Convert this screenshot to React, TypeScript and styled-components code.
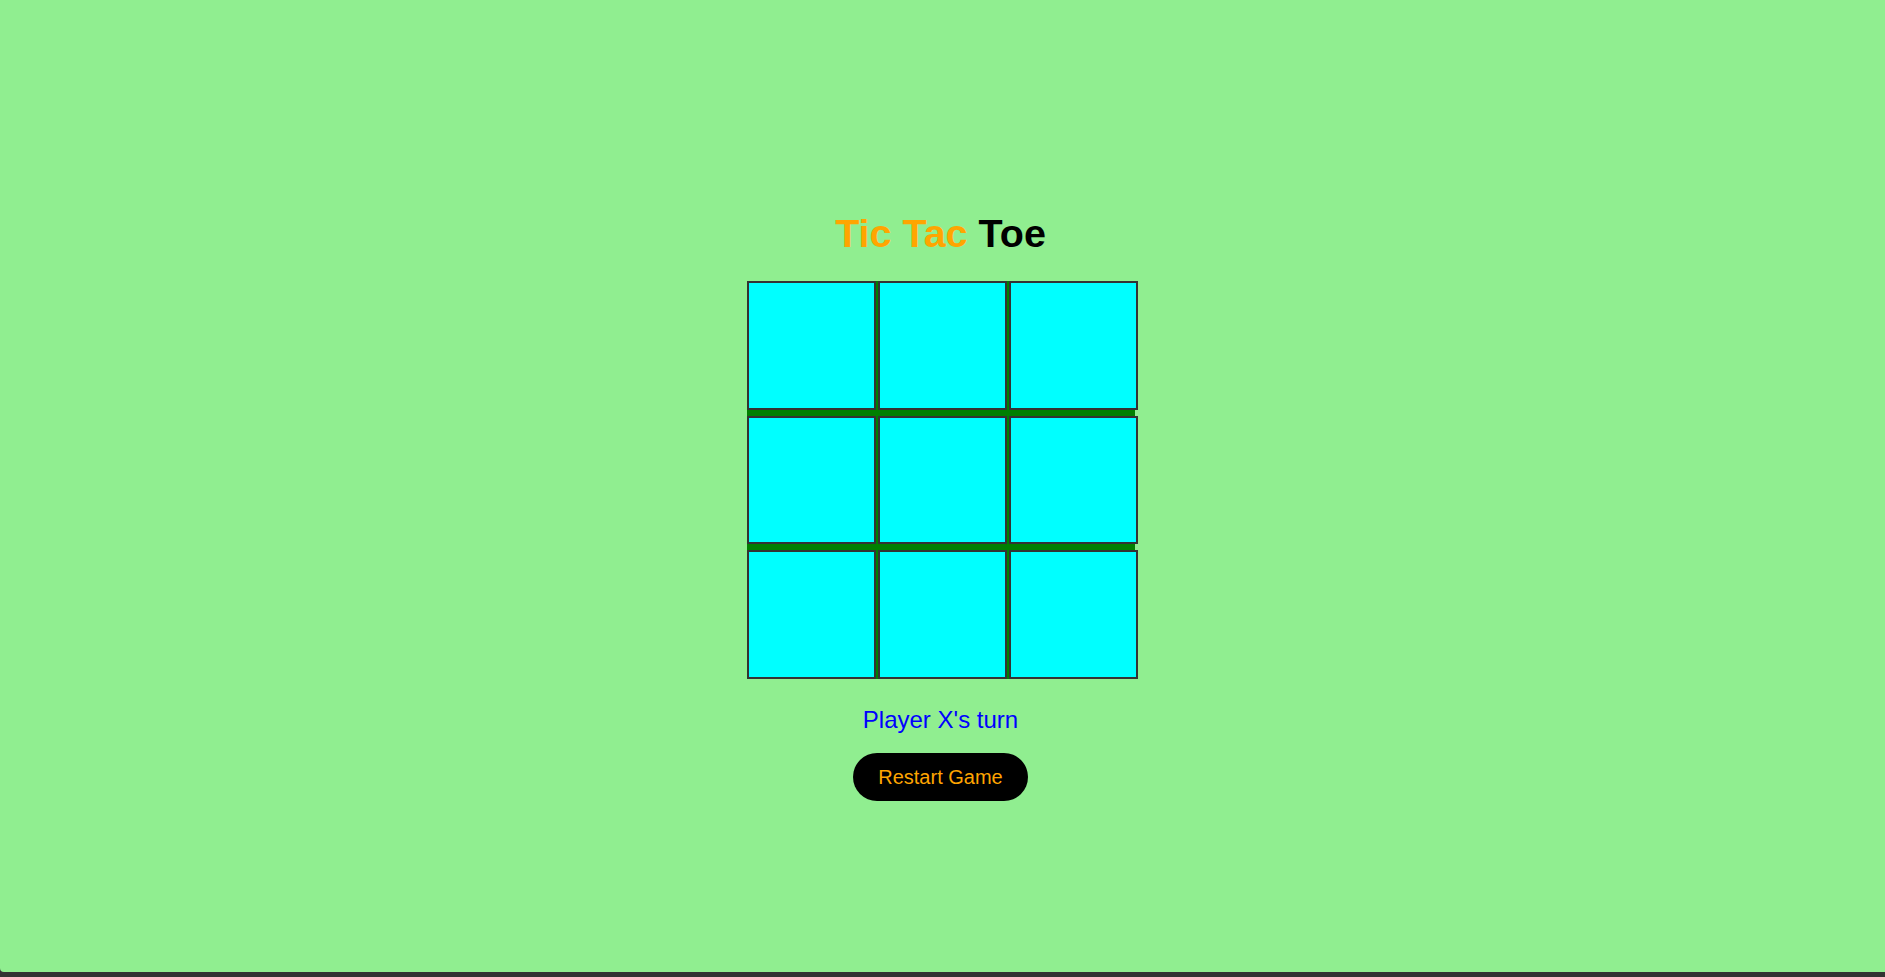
import React, { useState } from "react";
import styled, { createGlobalStyle } from "styled-components";

const Global = createGlobalStyle`
  html, body {
    margin: 0;
    padding: 0;
    background: #333333;
  }
  body {
    font-family: "Liberation Sans", Arial, sans-serif;
    height: 977px;
    overflow: hidden;
  }
`;

const Page = styled.div`
  height: 972px;
  background: #90ee90;
  border-bottom-left-radius: 4px;
  display: flex;
  flex-direction: column;
  align-items: center;
  padding-top: 211px;
  box-sizing: border-box;
`;

const Title = styled.h1`
  margin: 0 4px 0 0;
  font-size: 39.5px;
  font-weight: bold;
  line-height: 45px;
  color: #000000;
`;

const Accent = styled.span`
  color: #ffa500;
`;

const Board = styled.div`
  margin-top: 25px;
  width: 392px;
  height: 398px;
  display: grid;
  grid-template-columns: repeat(3, 1fr);
  grid-template-rows: repeat(3, 1fr);
  column-gap: 2px;
  row-gap: 6px;
  background: linear-gradient(#008000, #008000) left top / 388px 100% no-repeat;
`;

const Cell = styled.button`
  box-sizing: border-box;
  border: 2px solid #333333;
  background: #00ffff;
  margin: 0;
  padding: 0;
  font-family: "Liberation Sans", Arial, sans-serif;
  font-size: 64px;
  font-weight: bold;
  color: #000000;
  cursor: pointer;
`;

const Status = styled.p`
  margin: 27px 4px 0 0;
  font-size: 24px;
  line-height: normal;
  color: #0000ff;
`;

const RestartButton = styled.button`
  margin: 19px 4px 0 0;
  height: 48px;
  width: 175px;
  border: none;
  border-radius: 24px;
  background: #000000;
  color: #ffa500;
  font-family: "Liberation Sans", Arial, sans-serif;
  font-size: 20px;
  cursor: pointer;
`;

export default function App() {
  const [cells, setCells] = useState<string[]>(Array(9).fill(""));
  const [player, setPlayer] = useState<"X" | "O">("X");

  const play = (i: number) => {
    if (cells[i]) return;
    const next = cells.slice();
    next[i] = player;
    setCells(next);
    setPlayer(player === "X" ? "O" : "X");
  };

  const restart = () => {
    setCells(Array(9).fill(""));
    setPlayer("X");
  };

  return (
    <>
      <Global />
      <Page>
        <Title>
          <Accent>Tic Tac</Accent> Toe
        </Title>
        <Board>
          {cells.map((c, i) => (
            <Cell key={i} onClick={() => play(i)}>
              {c}
            </Cell>
          ))}
        </Board>
        <Status>Player {player}'s turn</Status>
        <RestartButton onClick={restart}>Restart Game</RestartButton>
      </Page>
    </>
  );
}
